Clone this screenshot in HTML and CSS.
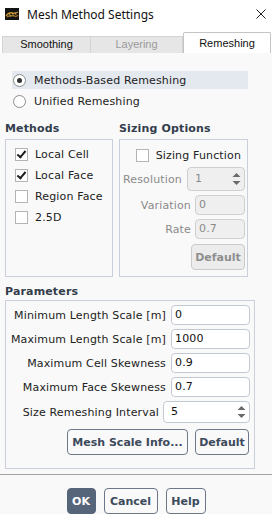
FILE: index.html
```html
<!DOCTYPE html>
<html>
  <head>
    <title>Mesh Method Settings</title>
    <link rel="stylesheet" href="styles.css">
  </head>
  <body>
    <div class="titlebar">
      <svg class="app-icon" width="14" height="12" viewBox="0 0 14 12">
        <rect width="14" height="12" fill="#141414" />
        <path d="M1 8 Q4 4 7 5 T13 4" stroke="#c99532" stroke-width="1.4" fill="none" />
        <path d="M2 9 Q6 7 9 8 T13 7" stroke="#a8782a" stroke-width="1.2" fill="none" />
        <path d="M4 5 L6 9 M7 5 L9 8 M10 4 L11 7" stroke="#d8a848" stroke-width="0.8" fill="none" />
      </svg>
      <span class="title">Mesh Method Settings</span>
      <svg class="close" width="10" height="10" viewBox="0 0 10 10">
        <path d="M0.5 0.5 L9.5 9.5 M9.5 0.5 L0.5 9.5" stroke="#222" stroke-width="1" />
      </svg>
    </div>

    <div class="tabs">
      <div class="tab tab-first">Smoothing</div>
      <div class="tab tab-mid">Layering</div>
      <div class="tab tab-active">Remeshing</div>
    </div>

    <div class="panel">
      <div class="radios">
        <div class="radio-row selected">
          <span class="radio checked"></span>
          <span>Methods-Based Remeshing</span>
        </div>
        <div class="radio-row">
          <span class="radio"></span>
          <span>Unified Remeshing</span>
        </div>
      </div>

      <div class="groups">
        <div class="group methods">
          <div class="group-title">Methods</div>
          <div class="group-box">
            <div class="check-row"><span class="check on"></span>Local Cell</div>
            <div class="check-row"><span class="check on"></span>Local Face</div>
            <div class="check-row"><span class="check"></span>Region Face</div>
            <div class="check-row"><span class="check"></span>2.5D</div>
          </div>
        </div>
        <div class="group sizing">
          <div class="group-title">Sizing Options</div>
          <div class="group-box">
            <div class="check-row right"><span class="check"></span>Sizing Function</div>
            <div class="field-row res">
              <span class="label disabled">Resolution</span>
              <div class="input spin disabled w58">1
                <svg class="arrows" width="9" height="14" viewBox="0 0 9 14"><path d="M0.5 5 L4.5 1 L8.5 5 Z M0.5 9 L4.5 13 L8.5 9 Z" fill="#6a6a6a" /></svg>
              </div>
            </div>
            <div class="field-row">
              <span class="label disabled">Variation</span>
              <div class="input disabled w50">0</div>
            </div>
            <div class="field-row">
              <span class="label disabled">Rate</span>
              <div class="input disabled w50">0.7</div>
            </div>
            <div class="btn-row">
              <button class="btn disabled-btn">Default</button>
            </div>
          </div>
        </div>
      </div>

      <div class="group params">
        <div class="group-title">Parameters</div>
        <div class="group-box">
          <div class="param-row"><span class="label">Minimum Length Scale [m]</span><div class="input w79">0</div></div>
          <div class="param-row"><span class="label">Maximum Length Scale [m]</span><div class="input w79">1000</div></div>
          <div class="param-row"><span class="label">Maximum Cell Skewness</span><div class="input w79">0.9</div></div>
          <div class="param-row"><span class="label">Maximum Face Skewness</span><div class="input w79">0.7</div></div>
          <div class="param-row spin-row"><span class="label">Size Remeshing Interval</span>
            <div class="input spin w87">5
              <svg class="arrows" width="9" height="14" viewBox="0 0 9 14"><path d="M0.5 5 L4.5 1 L8.5 5 Z M0.5 9 L4.5 13 L8.5 9 Z" fill="#6a6a6a" /></svg>
            </div>
          </div>
          <div class="param-buttons">
            <button class="btn w121">Mesh Scale Info...</button>
            <button class="btn w54">Default</button>
          </div>
        </div>
      </div>
    </div>

    <hr class="separator" />

    <div class="footer">
      <button class="btn ok">OK</button>
      <button class="btn w54">Cancel</button>
      <button class="btn w40">Help</button>
    </div>
  </body>
</html>
```

FILE: styles.css
```css
body {
  margin: 0;
  width: 272px;
  height: 514px;
  overflow: hidden;
  background-color: #f9f9f9;
  font-family: "DejaVu Sans", sans-serif;
  font-size: 11px;
  letter-spacing: 0.15px;
  color: #222222;
}
.titlebar {
  height: 28px;
  display: flex;
  align-items: center;
  padding: 0 6px 0 5px;
  background-color: #ffffff;
}
.app-icon {
  margin-right: 8px;
}
.title {
  font-family: "Noto Sans", sans-serif;
  font-size: 12px;
  letter-spacing: 0;
  color: #111111;
}
.close {
  margin-left: auto;
  margin-right: 0;
}
.tabs {
  display: flex;
  align-items: flex-end;
  height: 21px;
  padding: 4px 0 0 2px;
  background-color: #ffffff;
}
.tab {
  box-sizing: border-box;
  height: 17px;
  line-height: 15px;
  text-align: center;
  font-family: "Liberation Sans", sans-serif;
  font-size: 11px;
  letter-spacing: 0;
  background-color: #e6e6e6;
  border: 1px solid #d3d3d3;
  border-bottom: none;
  color: #111111;
}
.tab-first {
  width: 89px;
}
.tab-mid {
  width: 92px;
  border-left: none;
  color: #9a9a9a;
}
.tab-active {
  width: 88px;
  height: 21px;
  line-height: 20px;
  background-color: #ffffff;
  border-color: #c4c4c4;
  border-radius: 2px 2px 0 0;
}
.panel {
  padding-top: 18px;
}
.radios {
  margin-left: 12px;
  width: 236px;
}
.radio-row {
  height: 18px;
  display: flex;
  align-items: center;
  margin-bottom: 3px;
}
.radio-row.selected {
  background-color: #e4e8ef;
}
.radio {
  box-sizing: border-box;
  width: 13px;
  height: 13px;
  border-radius: 50%;
  border: 1px solid #8c8c8c;
  background-color: #ffffff;
  margin: 0 8px 0 1px;
  position: relative;
}
.radio.checked::after {
  content: "";
  position: absolute;
  left: 3px;
  top: 3px;
  width: 5px;
  height: 5px;
  border-radius: 50%;
  background-color: #333333;
}
.groups {
  display: flex;
  margin: 11px 0 0 5px;
  gap: 6px;
}
.group-title {
  height: 16px;
  line-height: 16px;
  font-weight: bold;
  color: #333d4b;
  margin-bottom: 2px;
}
.group-box {
  box-sizing: border-box;
  border: 1px solid #c9d0db;
}
.methods {
  width: 108px;
}
.methods .group-box {
  height: 138px;
  padding: 4px 0 0 9px;
}
.sizing {
  width: 129px;
}
.sizing .group-box {
  height: 138px;
  padding: 8px 2px 0 0;
}
.check-row {
  height: 21px;
  display: flex;
  align-items: center;
}
.check-row.right {
  height: 14px;
  justify-content: flex-end;
  padding-right: 4px;
}
.check {
  box-sizing: border-box;
  width: 13px;
  height: 13px;
  border: 1px solid #b4b4b4;
  background-color: #ffffff;
  margin-right: 7px;
  position: relative;
}
.check.on::after {
  content: "";
  position: absolute;
  left: 3px;
  top: 0px;
  width: 3px;
  height: 7px;
  border: solid #1e1e1e;
  border-width: 0 2px 2px 0;
  transform: rotate(40deg);
}
.field-row {
  display: flex;
  justify-content: flex-end;
  align-items: center;
  margin-top: 4px;
}
.field-row.res {
  margin-top: 5px;
}
.label {
  margin-right: 5px;
  white-space: nowrap;
}
.label.disabled {
  color: #8a8a8a;
}
.field-row .label {
  margin-right: 4px;
}
.field-row.res .label {
  margin-right: 5px;
}
.input {
  box-sizing: border-box;
  height: 20px;
  line-height: 18px;
  padding-left: 3px;
  background-color: #ffffff;
  border: 1px solid #c3c9d1;
  border-radius: 4px;
  color: #111111;
  position: relative;
}
.input.disabled {
  background-color: #efefef;
  border-color: #cfcfcf;
  color: #8a8a8a;
}
.input.spin {
  height: 22px;
  line-height: 20px;
  padding-left: 7px;
}
.field-row.res .input.spin {
  height: 24px;
  line-height: 22px;
}
.arrows {
  position: absolute;
  right: 3px;
  top: 50%;
  margin-top: -7px;
}
.w50 { width: 50px; }
.w58 { width: 58px; }
.w79 { width: 79px; }
.w87 { width: 87px; }
.w121 { width: 121px; }
.w54 { width: 54px; }
.w40 { width: 40px; }
.btn-row {
  display: flex;
  justify-content: flex-end;
  margin-top: 5px;
}
.btn {
  box-sizing: border-box;
  height: 26px;
  padding: 0;
  font-family: "DejaVu Sans", sans-serif;
  font-size: 11px;
  font-weight: bold;
  color: #3c4a5c;
  background-color: #f9f9f9;
  border: 1px solid #6c7887;
  border-radius: 4px;
}
.disabled-btn {
  width: 54px;
  color: #8e8e8e;
  background-color: #ececec;
  border-color: #cacaca;
}
.params {
  margin: 7px 0 0 5px;
  width: 250px;
}
.params .group-title {
  margin-bottom: 0;
}
.params .group-box {
  height: 169px;
  padding: 4px 4px 0 0;
}
.param-row {
  display: flex;
  justify-content: flex-end;
  align-items: center;
  height: 20px;
  margin-bottom: 4px;
}
.spin-row {
  height: 22px;
}
.spin-row .label {
  margin-right: 4px;
}
.param-buttons {
  display: flex;
  justify-content: flex-end;
  gap: 7px;
  margin-top: 6px;
  padding-right: 1px;
}
.separator {
  border: none;
  border-top: 1px solid #a3a3a3;
  margin: 5px 0 0 0;
}
.footer {
  display: flex;
  justify-content: center;
  gap: 8px;
  margin-top: 13px;
}
.ok {
  width: 29px;
  background-color: #56657a;
  border-color: #56657a;
  color: #ffffff;
}
```
